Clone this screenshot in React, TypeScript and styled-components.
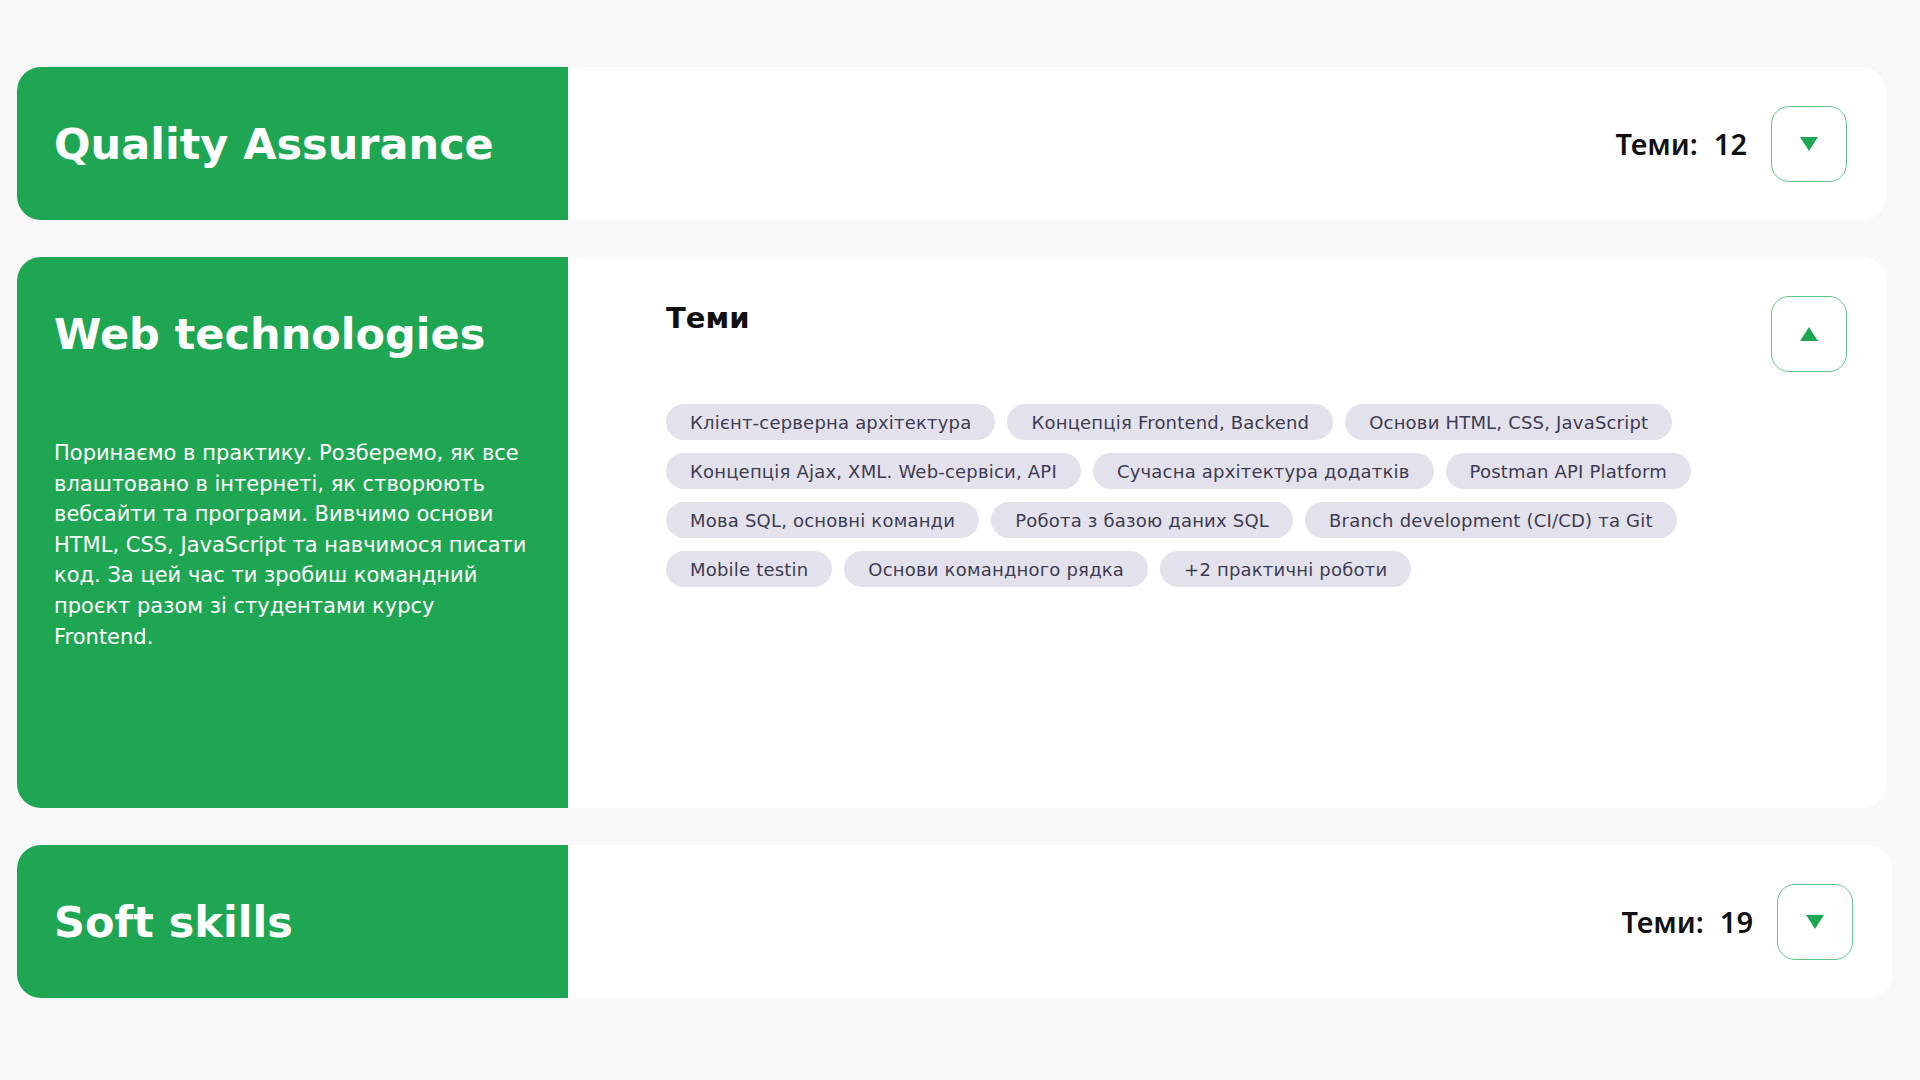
import React from 'react';
import styled, { createGlobalStyle } from 'styled-components';

const GlobalStyle = createGlobalStyle`
  body {
    margin: 0;
    background: #f8f8f8;
    font-family: "DejaVu Sans", "Noto Sans", sans-serif;
  }
`;

const Page = styled.div`
  padding: 67px 0 60px 17px;
  display: flex;
  flex-direction: column;
  gap: 37px;
`;

const Card = styled.div<{ $width: number }>`
  width: ${p => p.$width}px;
  display: flex;
  background: #ffffff;
  border-radius: 24px;
  overflow: hidden;
`;

const GreenSide = styled.div<{ $open: boolean }>`
  width: 551px;
  flex-shrink: 0;
  background: #1fa652;
  color: #ffffff;
  padding: 0 37px;
  box-sizing: border-box;
  min-height: ${p => (p.$open ? 551 : 153)}px;
  display: flex;
  flex-direction: column;
`;

const Title = styled.h2`
  margin: 0;
  height: 153px;
  display: flex;
  align-items: center;
  font-size: 43px;
  font-weight: 700;
`;

const Description = styled.p`
  margin: 0;
  margin-top: 28px;
  font-size: 21px;
  line-height: 30.6px;
  font-weight: 400;
`;

const Body = styled.div<{ $open: boolean }>`
  flex: 1;
  display: flex;
  align-items: ${p => (p.$open ? 'flex-start' : 'center')};
  justify-content: space-between;
  padding: ${p => (p.$open ? '39px 39px 0 98px' : '0 39px 0 98px')};
`;

const Topics = styled.div`
  display: flex;
  flex-direction: column;
`;

const TopicsTitle = styled.h3`
  margin: 0;
  margin-top: 8px;
  font-size: 29px;
  font-weight: 700;
  color: #111;
  line-height: 1;
`;

const TagList = styled.div`
  margin-top: 71px;
  max-width: 1060px;
  display: flex;
  flex-wrap: wrap;
  gap: 13px 12px;
`;

const Tag = styled.span`
  height: 36px;
  padding: 0 24px;
  border-radius: 18px;
  background: #e3e1eb;
  color: #3e3c52;
  font-size: 18px;
  letter-spacing: 0.2px;
  display: inline-flex;
  align-items: center;
  white-space: nowrap;
`;

const Right = styled.div`
  margin-left: auto;
  display: flex;
  align-items: center;
  gap: 24px;
`;

const Count = styled.div`
  display: flex;
  gap: 16px;
  font-family: "Noto Sans", "DejaVu Sans", sans-serif;
  font-size: 29px;
  font-weight: 600;
  color: #111;
`;

const ToggleButton = styled.button`
  width: 76px;
  height: 76px;
  border-radius: 18px;
  border: 1.5px solid #63c488;
  background: #ffffff;
  display: flex;
  align-items: center;
  justify-content: center;
  padding: 0;
  cursor: pointer;
`;

const Arrow = ({ up }: { up?: boolean }) => (
  <svg width="18" height="14" viewBox="0 0 18 14">
    {up ? <path d="M9 0 L18 14 L0 14 Z" fill="#1fa652" /> : <path d="M0 0 L18 0 L9 14 Z" fill="#1fa652" />}
  </svg>
);

const tags = [
  'Клієнт-серверна архітектура',
  'Концепція Frontend, Backend',
  'Основи HTML, CSS, JavaScript',
  'Концепція Ajax, XML. Web-сервіси, API',
  'Сучасна архітектура додатків',
  'Postman API Platform',
  'Мова SQL, основні команди',
  'Робота з базою даних SQL',
  'Branch development (CI/CD) та Git',
  'Mobile testin',
  'Основи командного рядка',
  '+2 практичні роботи',
];

export default function App() {
  return (
    <>
      <GlobalStyle />
      <Page>
        <Card $width={1869}>
          <GreenSide $open={false}>
            <Title>Quality Assurance</Title>
          </GreenSide>
          <Body $open={false}>
            <Right>
              <Count>
                <span>Теми:</span>
                <span>12</span>
              </Count>
              <ToggleButton>
                <Arrow />
              </ToggleButton>
            </Right>
          </Body>
        </Card>

        <Card $width={1869}>
          <GreenSide $open>
            <Title>Web technologies</Title>
            <Description>
              Поринаємо в практику. Розберемо, як все влаштовано в інтернеті, як створюють вебсайти та програми.
              Вивчимо основи HTML, CSS, JavaScript та навчимося писати код. За цей час ти зробиш командний проєкт
              разом зі студентами курсу Frontend.
            </Description>
          </GreenSide>
          <Body $open>
            <Topics>
              <TopicsTitle>Теми</TopicsTitle>
              <TagList>
                {tags.map(t => (
                  <Tag key={t}>{t}</Tag>
                ))}
              </TagList>
            </Topics>
            <Right>
              <ToggleButton>
                <Arrow up />
              </ToggleButton>
            </Right>
          </Body>
        </Card>

        <Card $width={1875}>
          <GreenSide $open={false}>
            <Title>Soft skills</Title>
          </GreenSide>
          <Body $open={false}>
            <Right>
              <Count>
                <span>Теми:</span>
                <span>19</span>
              </Count>
              <ToggleButton>
                <Arrow />
              </ToggleButton>
            </Right>
          </Body>
        </Card>
      </Page>
    </>
  );
}
